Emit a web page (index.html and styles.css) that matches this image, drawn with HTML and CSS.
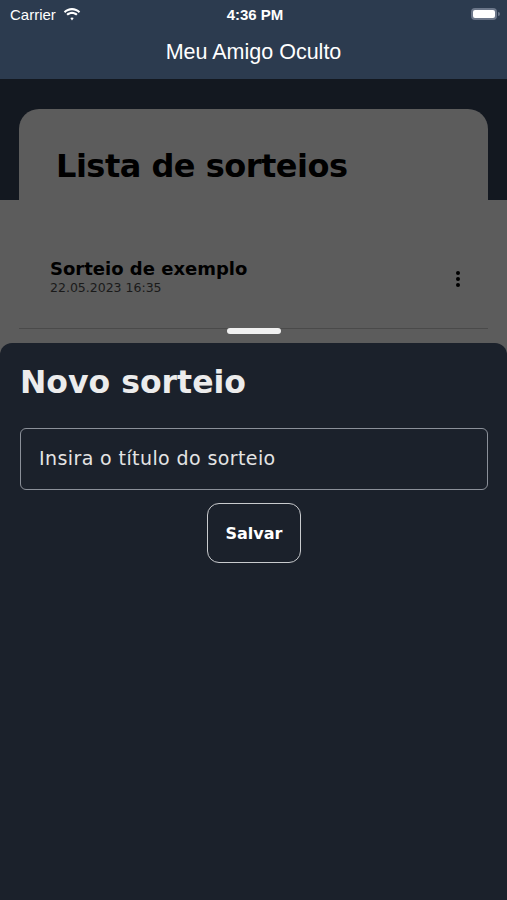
FILE: index.html
```html
<!DOCTYPE html>
<html lang="pt">
<head>
    <meta charset="UTF-8">
    <meta name="viewport" content="width=device-width, initial-scale=1.0">
    <title>Meu Amigo Oculto</title>
    <link rel="stylesheet" href="styles.css">
</head>
<body>
    <!-- Status bar + navigation -->
    <header class="topbar">
        <div class="status">
            <div class="status-left">
                <span>Carrier</span>
                <svg class="wifi" width="18" height="13" viewBox="0 0 18 13">
                    <path d="M9 2.2c2.6 0 5 1 6.8 2.7l1.4-1.5C15 1.3 12.1 0 9 0S3 1.3.8 3.4l1.4 1.5C4 3.2 6.4 2.2 9 2.2z" fill="#fff"/>
                    <path d="M9 5.9c1.6 0 3.1.6 4.2 1.7l1.4-1.5C13.1 4.7 11.1 3.8 9 3.8s-4.1.9-5.6 2.3l1.4 1.5C5.9 6.5 7.4 5.9 9 5.9z" fill="#fff"/>
                    <path d="M9 9.4c.7 0 1.3.3 1.7.7L9 12.6 7.3 10.1c.4-.4 1-.7 1.7-.7z" fill="#fff"/>
                </svg>
            </div>
            <span class="clock">4:36 PM</span>
            <div class="battery"><span class="battery-level"></span></div>
        </div>
        <div class="navbar">Meu Amigo Oculto</div>
    </header>

    <main class="stage">
        <section class="card">
            <h1>Lista de sorteios</h1>
        </section>
        <section class="panel">
            <div class="item">
                <div>
                    <div class="item-title">Sorteio de exemplo</div>
                    <div class="item-date">22.05.2023 16:35</div>
                </div>
                <svg class="more" width="6" height="18" viewBox="0 0 6 18">
                    <circle cx="3" cy="3" r="2" fill="#000"/>
                    <circle cx="3" cy="9" r="2" fill="#000"/>
                    <circle cx="3" cy="15" r="2" fill="#000"/>
                </svg>
            </div>
        </section>

        <!-- Bottom sheet -->
        <section class="sheet">
            <span class="grabber"></span>
            <h2>Novo sorteio</h2>
            <div class="field">Insira o título do sorteio</div>
            <div class="actions">
                <button type="button">Salvar</button>
            </div>
        </section>
    </main>
</body>
</html>
```

FILE: styles.css
```css
body {
    margin: 0;
    padding: 0;
    width: 507px;
    height: 900px;
    overflow: hidden;
    background-color: #1b212b;
    font-family: "Liberation Sans", Arial, sans-serif;
}

.topbar {
    background-color: #2c3b4f;
    color: white;
}

.status {
    height: 28px;
    padding: 0 7px 0 10px;
    display: flex;
    align-items: center;
    justify-content: space-between;
    font-size: 15px;
}

.status-left {
    display: flex;
    align-items: center;
    gap: 7px;
    width: 120px;
}

.clock {
    font-weight: bold;
}

.battery {
    width: 120px;
    display: flex;
    justify-content: flex-end;
    position: relative;
}

.battery-level {
    width: 22px;
    height: 8px;
    background-color: white;
    border: 2px solid #6b7689;
    border-radius: 4px;
    margin-right: 3px;
}

.battery::after {
    content: "";
    position: absolute;
    right: 0;
    top: 4px;
    width: 2px;
    height: 4px;
    background-color: #6b7689;
    border-radius: 0 2px 2px 0;
}

.navbar {
    height: 51px;
    display: flex;
    align-items: center;
    justify-content: center;
    font-size: 21.5px;
    padding-bottom: 2px;
    box-sizing: border-box;
}

.stage {
    background-color: #131820;
    padding-top: 30px;
    height: 821px;
    box-sizing: border-box;
    position: relative;
}

.card {
    margin: 0 19px;
    height: 91px;
    background-color: #5c5c5c;
    border-radius: 20px 20px 0 0;
    padding: 38px 0 0 37px;
    box-sizing: border-box;
}

h1 {
    margin: 0;
    font-family: "DejaVu Sans", sans-serif;
    font-size: 32px;
    font-weight: bold;
    color: #000;
    letter-spacing: -0.5px;
}

.panel {
    background-color: #5c5c5c;
    height: 160px;
    padding: 0 19px;
}

.item {
    height: 129px;
    border-bottom: 1px solid #4a4a4a;
    display: flex;
    align-items: center;
    justify-content: space-between;
    padding: 24px 27px 0 31px;
    box-sizing: border-box;
}

.item-title {
    font-family: "DejaVu Sans", sans-serif;
    font-weight: bold;
    font-size: 18px;
    color: #000;
}

.item-date {
    font-family: "DejaVu Sans", sans-serif;
    font-size: 12.5px;
    color: #1a1a1a;
    margin-top: 1px;
}

.more {
    margin-top: 6px;
}

.sheet {
    position: absolute;
    left: 0;
    right: 0;
    top: 264px;
    bottom: 0;
    background-color: #1b212b;
    border-radius: 12px 12px 0 0;
    padding: 21px 19px 0 20px;
    color: white;
}

.grabber {
    position: absolute;
    top: -15px;
    left: 227px;
    width: 54px;
    height: 6px;
    border-radius: 3px;
    background-color: #f0f0f0;
}

h2 {
    margin: 0;
    font-family: "DejaVu Sans", sans-serif;
    font-size: 31.5px;
    font-weight: bold;
    color: #ececec;
}

.field {
    margin-top: 28px;
    height: 62px;
    border: 1.5px solid #8b9099;
    border-radius: 6px;
    box-sizing: border-box;
    display: flex;
    align-items: center;
    padding: 0 18px 2px;
    font-family: "DejaVu Sans", sans-serif;
    font-size: 19px;
    letter-spacing: 0.4px;
    color: #e4e4e4;
}

.actions {
    display: flex;
    justify-content: center;
    margin-top: 13px;
}

button {
    width: 94px;
    height: 60px;
    background-color: transparent;
    border: 1.5px solid #c9cbce;
    border-radius: 12px;
    color: white;
    font-family: "DejaVu Sans", sans-serif;
    font-size: 16px;
    font-weight: bold;
}
```
